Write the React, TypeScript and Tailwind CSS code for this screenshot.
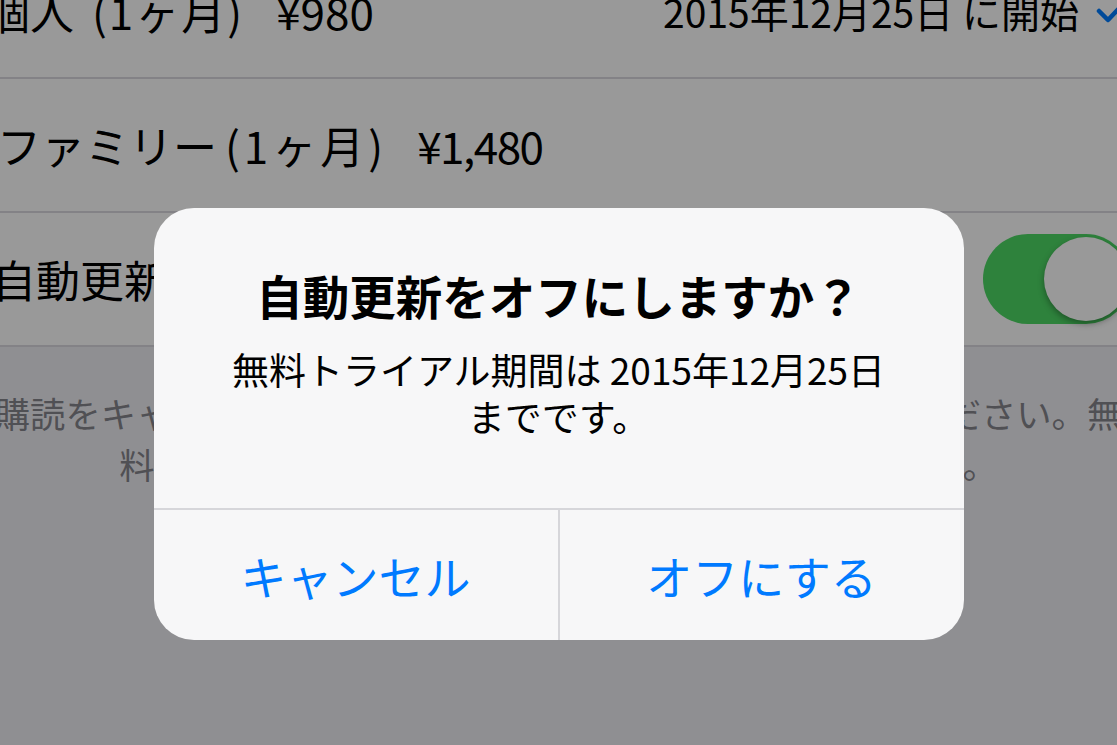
const jp = "font-['Noto_Sans_CJK_JP','Noto_Sans',sans-serif]";

function Check() {
  return (
    <svg viewBox="0 0 34 26" className="h-[26px] w-[34px] shrink-0" fill="none">
      <path d="M4 13 L13 22 L30 4" stroke="#004a99" strokeWidth="4.5" strokeLinecap="round" strokeLinejoin="round" />
    </svg>
  );
}

function Toggle() {
  return (
    <div className="relative -mr-[14px] h-[90px] w-[148px] shrink-0 rounded-full bg-[#2e823c]">
      <div className="absolute right-[3px] top-[3px] h-[84px] w-[84px] rounded-full bg-[#999999] shadow-[0_3px_6px_rgba(0,0,0,0.35)]" />
    </div>
  );
}

function Row({ children }: { children: React.ReactNode }) {
  return (
    <div className="flex h-[134px] items-center justify-between border-b-2 border-[#838286] bg-[#999999]">
      {children}
    </div>
  );
}

export default function App() {
  return (
    <div className={`relative h-[745px] w-full overflow-hidden bg-[#8f8f92] ${jp}`}>
      <div className="-mt-[55px]">
        <Row>
          <div className="-ml-[14px] flex items-center whitespace-nowrap text-[44px] text-black">
            <span>個人</span>
            <span className="ml-[18px] tracking-[2px]">(1ヶ月)</span>
            <span className="ml-[32px]">¥980</span>
          </div>
          <div className="flex items-center gap-[16px]">
            <span className="whitespace-nowrap text-[39px] text-black">2015年12月25日 に開始</span>
            <div className="-mr-[12px]">
              <Check />
            </div>
          </div>
        </Row>
        <Row>
          <div className="-ml-[3px] flex items-center whitespace-nowrap text-[44px] text-black">
            <span>ファミリー</span>
            <span className="ml-[8px] tracking-[4px]">(1ヶ月)</span>
            <span className="ml-[30px] tracking-[-1.5px]">¥1,480</span>
          </div>
        </Row>
        <Row>
          <span className="-ml-[8px] whitespace-nowrap text-[44px] text-black">自動更新</span>
          <Toggle />
        </Row>
      </div>

      <div className="flex flex-col items-center pt-[40px] text-[35.3px] leading-[51px] text-[#505054]">
        <div className="flex w-full justify-center whitespace-nowrap">購読をキャンセルする場合は、必ず自動更新をオフにしてください。無</div>
        <div className="flex w-full justify-center whitespace-nowrap">料トライアル期間の終了後は、自動的に更新されます。</div>
      </div>

      <div className="absolute inset-0 flex justify-center pt-[208px]">
        <div className="flex h-[432px] w-[810px] flex-col overflow-hidden rounded-[40px] bg-[#f7f7f8]">
          <div className="flex flex-1 flex-col items-center pt-[59px] text-black">
            <div className="text-[46.5px] font-bold leading-[56px]">自動更新をオフにしますか？</div>
            <div className="mt-[23px] text-center text-[37px] leading-[47px]">
              <div>無料トライアル期間は 2015年12月25日</div>
              <div>までです。</div>
            </div>
          </div>
          <div className="flex h-[132px] border-t-2 border-[#d6d6da] text-[46px] text-[#007aff]">
            <button type="button" className="flex flex-1 items-center justify-center border-r-2 border-[#d6d6da]">
              キャンセル
            </button>
            <button type="button" className="flex flex-1 items-center justify-center">
              オフにする
            </button>
          </div>
        </div>
      </div>
    </div>
  );
}
